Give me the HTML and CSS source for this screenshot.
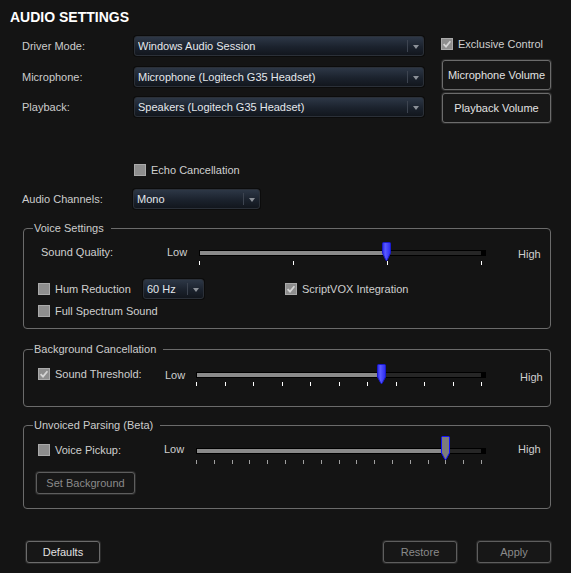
FILE: index.html
```html
<!DOCTYPE html>
<html lang="en">
<head>
<meta charset="utf-8">
<title>Audio Settings</title>
<link rel="stylesheet" href="styles.css">
</head>
<body>
<div class="app">
  <h1 class="title">AUDIO SETTINGS</h1>

  <div class="top">
    <div class="fields">
      <span class="lbl">Driver Mode:</span>
      <div class="select"><span class="val">Windows Audio Session</span><span class="arrow"></span></div>
      <span class="lbl">Microphone:</span>
      <div class="select"><span class="val">Microphone (Logitech G35 Headset)</span><span class="arrow"></span></div>
      <span class="lbl">Playback:</span>
      <div class="select"><span class="val">Speakers (Logitech G35 Headset)</span><span class="arrow"></span></div>
    </div>
    <div class="side">
      <div class="check">
        <svg class="cb" viewBox="0 0 12 12"><rect x="0.5" y="0.5" width="11" height="11" fill="#8e8e8e" stroke="#aaaaaa"/><path d="M2.6 6.1 L5 8.6 L9.4 3.3" fill="none" stroke="#d4d4d4" stroke-width="1.8"/></svg>
        <span>Exclusive Control</span>
      </div>
      <button class="btn btn-side">Microphone Volume</button>
      <button class="btn btn-side btn-side2">Playback Volume</button>
    </div>
  </div>

  <div class="check echo">
    <svg class="cb" viewBox="0 0 12 12"><rect x="0.5" y="0.5" width="11" height="11" fill="#8e8e8e" stroke="#aaaaaa"/></svg>
    <span>Echo Cancellation</span>
  </div>

  <div class="channels">
    <span class="lbl">Audio Channels:</span>
    <div class="select"><span class="val">Mono</span><span class="arrow"></span></div>
  </div>

  <fieldset class="group group-voice">
    <legend>Voice Settings</legend>
    <div class="srow">
      <span class="lead lead-sq">Sound Quality:</span>
      <span class="low low-sq">Low</span>
      <div class="slider slider-sq">
        <div class="track"><div class="fill" style="width:187px"></div></div>
        <div class="ticks"><i></i><i></i><i></i><i></i></div>
        <svg class="thumb" style="left:183px" viewBox="0 0 9 19"><defs><linearGradient id="tb1" x1="0" x2="1"><stop offset="0" stop-color="#2626e8"/><stop offset="0.35" stop-color="#5a5aff"/><stop offset="1" stop-color="#2a2af0"/></linearGradient></defs><path d="M1.5 0.5 H7.5 Q8.5 0.5 8.5 1.5 V11 L5 18.5 H4 L0.5 11 V1.5 Q0.5 0.5 1.5 0.5 Z" fill="url(#tb1)" stroke="#1a1acc" stroke-width="1"/></svg>
      </div>
      <span class="high high-sq">High</span>
    </div>
    <div class="hrow">
      <div class="check lead-hum">
        <svg class="cb" viewBox="0 0 12 12"><rect x="0.5" y="0.5" width="11" height="11" fill="#8e8e8e" stroke="#aaaaaa"/></svg>
        <span>Hum Reduction</span>
      </div>
      <div class="select select-hz"><span class="val">60 Hz</span><span class="arrow"></span></div>
      <div class="check vox">
        <svg class="cb" viewBox="0 0 12 12"><rect x="0.5" y="0.5" width="11" height="11" fill="#8e8e8e" stroke="#aaaaaa"/><path d="M2.6 6.1 L5 8.6 L9.4 3.3" fill="none" stroke="#d4d4d4" stroke-width="1.8"/></svg>
        <span>ScriptVOX Integration</span>
      </div>
    </div>
    <div class="check frow">
      <svg class="cb" viewBox="0 0 12 12"><rect x="0.5" y="0.5" width="11" height="11" fill="#8e8e8e" stroke="#aaaaaa"/></svg>
      <span>Full Spectrum Sound</span>
    </div>
  </fieldset>

  <fieldset class="group group-bc">
    <legend>Background Cancellation</legend>
    <div class="srow">
      <div class="check lead lead-bc">
        <svg class="cb" viewBox="0 0 12 12"><rect x="0.5" y="0.5" width="11" height="11" fill="#8e8e8e" stroke="#aaaaaa"/><path d="M2.6 6.1 L5 8.6 L9.4 3.3" fill="none" stroke="#d4d4d4" stroke-width="1.8"/></svg>
        <span>Sound Threshold:</span>
      </div>
      <span class="low low-bc">Low</span>
      <div class="slider slider-bc">
        <div class="track"><div class="fill" style="width:185px"></div></div>
        <div class="ticks"><i></i><i></i><i></i><i></i><i></i><i></i><i></i><i></i><i></i><i></i><i></i></div>
        <svg class="thumb thumb-bc" style="left:181px" viewBox="0 0 9 20"><defs><linearGradient id="tb2" x1="0" x2="1"><stop offset="0" stop-color="#2626e8"/><stop offset="0.35" stop-color="#5a5aff"/><stop offset="1" stop-color="#2a2af0"/></linearGradient></defs><path d="M1.5 0.5 H7.5 Q8.5 0.5 8.5 1.5 V13 L5 19.5 H4 L0.5 13 V1.5 Q0.5 0.5 1.5 0.5 Z" fill="url(#tb2)" stroke="#1a1acc" stroke-width="1"/></svg>
      </div>
      <span class="high high-bc">High</span>
    </div>
  </fieldset>

  <fieldset class="group group-up">
    <legend>Unvoiced Parsing (Beta)</legend>
    <div class="srow">
      <div class="check lead lead-up">
        <svg class="cb" viewBox="0 0 12 12"><rect x="0.5" y="0.5" width="11" height="11" fill="#8e8e8e" stroke="#aaaaaa"/></svg>
        <span>Voice Pickup:</span>
      </div>
      <span class="low low-up">Low</span>
      <div class="slider slider-up">
        <div class="track"><div class="fill" style="width:249px"></div></div>
        <div class="ticks"><i></i><i></i><i></i><i></i><i></i><i></i><i></i><i></i><i></i><i></i><i></i><i></i><i></i><i></i><i></i><i></i><i></i></div>
        <svg class="thumb thumb-up" style="left:245px" viewBox="0 0 9 24"><path d="M1.5 0.5 H7.5 Q8.5 0.5 8.5 1.5 V17 L5 23.5 H4 L0.5 17 V1.5 Q0.5 0.5 1.5 0.5 Z" fill="#7c7c7c" stroke="#1010ff" stroke-width="1"/></svg>
      </div>
      <span class="high high-up">High</span>
    </div>
    <button class="btn btn-off btn-bg">Set Background</button>
  </fieldset>

  <div class="footer">
    <button class="btn btn-foot">Defaults</button>
    <button class="btn btn-foot btn-off btn-restore">Restore</button>
    <button class="btn btn-foot btn-off btn-apply">Apply</button>
  </div>
</div>
</body>
</html>
```

FILE: styles.css
```css
* {
  box-sizing: border-box;
}

body {
  margin: 0;
  background: #141414;
  font-family: "Liberation Sans", Arial, sans-serif;
  font-size: 11px;
  line-height: 14px;
  color: #cfcfcf;
}

.app {
  width: 571px;
  height: 573px;
  padding-top: 9px;
  overflow: hidden;
}

.title {
  margin: 0 0 0 10px;
  font-size: 14px;
  line-height: 16px;
  font-weight: bold;
  color: #ffffff;
}

/* top block */
.top {
  display: flex;
  margin-top: 11px;
  padding-left: 22px;
}

.fields {
  display: grid;
  grid-template-columns: 112px 290px;
  grid-auto-rows: 20px;
  row-gap: 10.5px;
  align-items: center;
}

.lbl {
  color: #cccccc;
}

.select {
  display: flex;
  align-items: center;
  height: 20px;
  border: 1px solid #2b3038;
  border-radius: 3px;
  background: linear-gradient(#2d3746, #1b222d 55%, #12161d);
  color: #e4e8ec;
  padding-left: 3px;
  box-shadow: 0 0 0 1px #0c0c0c;
}

.val {
  flex: 1;
  white-space: nowrap;
  overflow: hidden;
}

.arrow {
  position: relative;
  width: 16px;
  height: 12px;
  border-left: 1px solid #3d4450;
}

.arrow::after {
  content: "";
  position: absolute;
  left: 5px;
  top: 5px;
  border-left: 3px solid transparent;
  border-right: 3px solid transparent;
  border-top: 4px solid #8c9198;
}

.side {
  display: flex;
  flex-direction: column;
  margin-left: 17px;
  width: 110px;
}

.check {
  display: flex;
  align-items: center;
  gap: 5px;
  height: 16px;
  white-space: nowrap;
}

.cb {
  width: 12px;
  height: 12px;
  flex: none;
  display: block;
}

.btn {
  font: inherit;
  color: #e2e2e2;
  background: #171717;
  border: 1px solid #6c6c6c;
  border-radius: 3px;
  box-shadow: 0 0 0 1px #2a2a2a;
  padding: 0;
  white-space: nowrap;
}

.btn-side {
  height: 30px;
  width: 109px;
  margin-left: 1px;
  margin-top: 8px;
}

.btn-side2 {
  margin-top: 3px;
}

.btn-off {
  color: #8a8a8a;
  border-color: #5e5e5e;
}

/* echo + channels */
.echo {
  margin: 39px 0 0 134px;
}

.channels {
  display: grid;
  grid-template-columns: 111px 127px;
  align-items: center;
  height: 20px;
  margin: 11px 0 0 22px;
}

/* group boxes */
.group {
  width: 528px;
  margin: 12px 0 0 23px;
  padding: 0 0 0 14px;
  border: 1px solid #6b6b6b;
  border-radius: 4px;
  min-inline-size: 0;
}

.group legend {
  margin-left: -5px;
  padding: 0 7px 0 1px;
  line-height: 14px;
  color: #cccccc;
}

.group-voice {
  padding-top: 7px;
  padding-bottom: 10px;
}

.group-bc {
  margin-top: 13px;
  padding-top: 8px;
  padding-bottom: 20px;
}

.group-up {
  margin-top: 11px;
  padding-top: 4px;
  padding-bottom: 14px;
}

/* slider rows */
.srow {
  display: flex;
  align-items: flex-start;
}

.lead {
  flex: none;
}

.lead-sq {
  width: 129px;
  padding-left: 3px;
  margin-top: 3px;
}

.lead-bc {
  width: 127px;
  height: 14px;
  margin-top: 3px;
}

.lead-up {
  width: 126px;
  height: 14px;
  margin-top: 7px;
}

.low {
  flex: none;
}

.low-sq {
  width: 32px;
  margin-top: 3px;
}

.low-bc {
  width: 31px;
  margin-top: 4px;
}

.low-up {
  width: 32px;
  margin-top: 6px;
}

.slider {
  position: relative;
  flex: none;
}

.slider-sq {
  width: 283px;
}

.slider-bc,
.slider-up {
  width: 286px;
}

.track {
  height: 6px;
  margin-top: 8px;
  background: #262626;
  border: 1px solid #000000;
  box-shadow: 4px 0 0 #000000;
}

.fill {
  height: 100%;
  background: #8a8a8a;
}

.ticks {
  display: flex;
  justify-content: space-between;
  height: 4px;
  margin-top: 5px;
}

.ticks i {
  width: 1px;
  background: #ffffff;
}

.slider-bc .ticks {
  margin-top: 4px;
}

.slider-up .track {
  margin-top: 12px;
}

.slider-up .ticks {
  margin-top: 6px;
}

.slider-up .ticks i {
  background: #a0a0a0;
}

.thumb {
  position: absolute;
  top: 0;
  width: 9px;
  height: 19px;
}

.thumb-bc {
  height: 20px;
}

.thumb-up {
  height: 24px;
}

.high {
  flex: none;
}

.high-sq {
  margin: 5px 0 0 36px;
}

.high-bc {
  margin: 6px 0 0 38px;
}

.high-up {
  margin: 6px 0 0 36px;
}

/* voice settings rows */
.hrow {
  display: flex;
  align-items: center;
  height: 20px;
  margin-top: 14px;
}

.lead-hum {
  width: 105px;
}

.select-hz {
  width: 61px;
}

.vox {
  margin-left: 81px;
}

.frow {
  height: 14px;
  margin-top: 5px;
}

.btn-bg {
  display: block;
  width: 99px;
  height: 22px;
  margin: 8px 0 0 -2px;
}

/* footer */
.footer {
  display: flex;
  margin-top: 32px;
  padding: 0 20px 0 26px;
}

.btn-foot {
  width: 74px;
  height: 22px;
}

.btn-restore {
  margin-left: auto;
}

.btn-apply {
  margin-left: 20px;
}
```
